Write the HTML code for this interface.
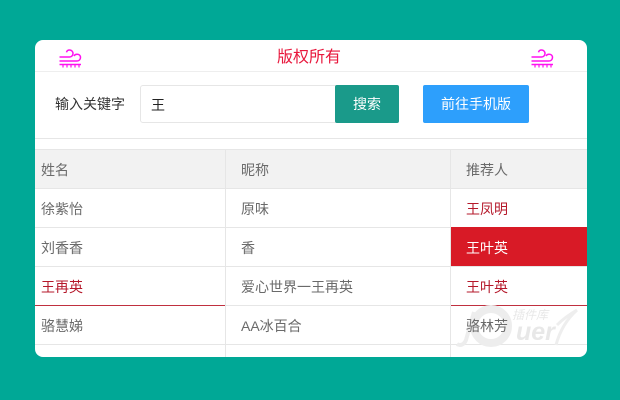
<!DOCTYPE html>
<html lang="zh">
<head>
<meta charset="utf-8">
<style>
html,body{margin:0;padding:0;width:620px;height:400px;overflow:hidden;background:#00a896;}
body{position:relative;font-family:"Liberation Sans","Noto Sans CJK SC",sans-serif;}
.a{position:absolute;}
.t{position:absolute;font-size:14px;line-height:20px;white-space:nowrap;color:#6a6a6a;}
.card{position:absolute;left:35px;top:40px;width:552px;height:317px;background:#fff;border-radius:8px;overflow:hidden;}
.h{position:absolute;left:0;width:552px;height:1px;background:#e6e6e6;}
.v{position:absolute;width:1px;top:110px;height:207px;background:#e6e6e6;}
.red{color:#b5192b;}
</style>
</head>
<body>
<div class="card">
  <div class="a" style="left:0;top:110px;width:552px;height:38px;background:#f2f2f2;"></div>
  <div class="h" style="top:31px;background:#eee;"></div>
  <div class="h" style="top:98px;"></div>
  <div class="h" style="top:109px;"></div>
  <div class="h" style="top:148px;"></div>
  <div class="h" style="top:187px;"></div>
  <div class="h" style="top:226px;"></div>
  <div class="h" style="top:265px;"></div>
  <div class="h" style="top:304px;"></div>
  <div class="v" style="left:190px;"></div>
  <div class="v" style="left:415px;"></div>
  <div class="a" style="left:0;top:265px;width:190px;height:1px;background:#c0303f;"></div>
  <div class="a" style="left:416px;top:265px;width:136px;height:1px;background:#c0303f;"></div>
  <div class="a" style="left:416px;top:187px;width:136px;height:39px;background:#d81a26;"></div>
  <svg class="a" style="left:-35px;top:-40px;" width="620" height="400" viewBox="0 0 620 400" fill="none">
    <circle cx="491" cy="326" r="17" stroke="#ededed" stroke-width="8"/>
    <path d="M474 312L466 340C464 345 460 346 457 344" stroke="#ededed" stroke-width="4"/>
    <path d="M556 345C560 330 568 318 577 310M557 325C562 320 570 314 577 310" stroke="#eeeeee" stroke-width="3"/>
    <text x="516" y="340" font-family="Liberation Sans" font-size="25" font-weight="700" font-style="italic" fill="#e8e8e8">uer</text>
    <text x="512" y="319" font-family="Noto Sans CJK SC" font-size="12" font-style="italic" fill="#e8e8e8">插件库</text>
  </svg>
</div>

<svg class="a" style="left:58px;top:48px;" width="24" height="21" viewBox="0 0 24 21" fill="none" stroke="#ff10f0" stroke-width="1.5">
  <path d="M1.5 9H11.5C13.5 9 15 7.5 15 5.5C15 3.5 13.5 2 11.5 2C9.8 2 8.8 3 8.5 4.3"/>
  <path d="M1.5 13H19C21 13 22.5 11.5 22.5 9.5C22.5 7.5 21 6.2 19 6.2C17.5 6.2 16.5 7 16 8"/>
  <path d="M1.5 16.5H23"/>
  <path d="M5 16.5V19.5M9 16.5V19.5M13 16.5V19.5M17 16.5V19.5M21 16.5V19.5" stroke-width="1.2"/>
</svg>
<svg class="a" style="left:530px;top:48px;" width="24" height="21" viewBox="0 0 24 21" fill="none" stroke="#ff10f0" stroke-width="1.5">
  <path d="M1.5 9H11.5C13.5 9 15 7.5 15 5.5C15 3.5 13.5 2 11.5 2C9.8 2 8.8 3 8.5 4.3"/>
  <path d="M1.5 13H19C21 13 22.5 11.5 22.5 9.5C22.5 7.5 21 6.2 19 6.2C17.5 6.2 16.5 7 16 8"/>
  <path d="M1.5 16.5H23"/>
  <path d="M5 16.5V19.5M9 16.5V19.5M13 16.5V19.5M17 16.5V19.5M21 16.5V19.5" stroke-width="1.2"/>
</svg>

<div class="t" style="left:277px;top:47px;font-size:16px;line-height:22px;color:#e8173c;">版权所有</div>

<div class="t" style="left:55px;top:94px;font-size:14px;color:#333;">输入关键字</div>
<div class="a" style="left:140px;top:85px;width:200px;height:36px;border:1px solid #e6e6e6;border-radius:3px;background:#fff;"></div>
<div class="t" style="left:151px;top:95px;color:#222;">王</div>
<div class="a" style="left:335px;top:85px;width:64px;height:38px;background:#1a9a8a;border-radius:2px;"></div>
<div class="t" style="left:353px;top:94px;color:#fff;">搜索</div>
<div class="a" style="left:423px;top:85px;width:106px;height:38px;background:#2d9ffc;border-radius:2px;"></div>
<div class="t" style="left:441px;top:94px;color:#fff;">前往手机版</div>

<div class="t" style="left:41px;top:160px;">姓名</div>
<div class="t" style="left:241px;top:160px;">昵称</div>
<div class="t" style="left:466px;top:160px;">推荐人</div>

<div class="t" style="left:41px;top:199px;">徐紫怡</div>
<div class="t" style="left:241px;top:199px;">原味</div>
<div class="t red" style="left:466px;top:199px;">王凤明</div>

<div class="t" style="left:41px;top:238px;">刘香香</div>
<div class="t" style="left:241px;top:238px;">香</div>
<div class="t" style="left:466px;top:238px;color:#fff;">王叶英</div>

<div class="t red" style="left:41px;top:277px;">王再英</div>
<div class="t" style="left:241px;top:277px;">爱心世界一王再英</div>
<div class="t red" style="left:466px;top:277px;">王叶英</div>

<div class="t" style="left:41px;top:316px;">骆慧娣</div>
<div class="t" style="left:241px;top:316px;">AA冰百合</div>
<div class="t" style="left:466px;top:316px;">骆林芳</div>
</body>
</html>
